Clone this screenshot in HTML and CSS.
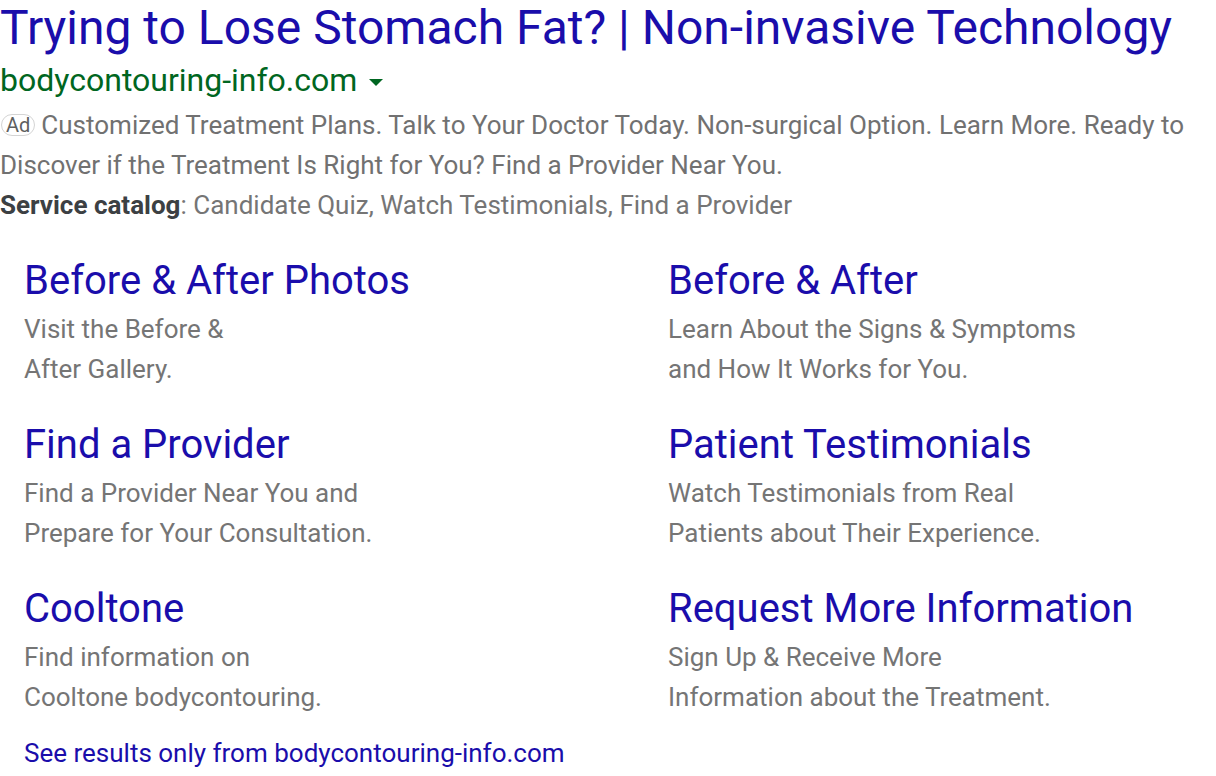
FILE: index.html
```html
<!DOCTYPE html>
<html>
<head>
<meta charset="utf-8">
<link rel="stylesheet" href="styles.css">
</head>
<body>
<div class="ad">
  <a class="title" href="#">Trying to Lose Stomach Fat? | Non-invasive Technology</a>
  <div class="url">bodycontouring-info.com <span class="caret"></span></div>
  <div class="desc"><span class="badge">Ad</span><span class="desc-text">Customized Treatment Plans. Talk to Your Doctor Today. Non-surgical Option. Learn More. Ready to Discover if the Treatment Is Right for You? Find a Provider Near You.</span></div>
  <div class="catalog"><b>Service catalog</b>: Candidate Quiz, Watch Testimonials, Find a Provider</div>
  <div class="sitelinks">
    <div class="sl">
      <a class="sl-title" href="#">Before &amp; After Photos</a>
      <div class="sl-desc">Visit the Before &amp;<br>After Gallery.</div>
    </div>
    <div class="sl">
      <a class="sl-title" href="#">Before &amp; After</a>
      <div class="sl-desc">Learn About the Signs &amp; Symptoms<br>and How It Works for You.</div>
    </div>
    <div class="sl">
      <a class="sl-title" href="#">Find a Provider</a>
      <div class="sl-desc">Find a Provider Near You and<br>Prepare for Your Consultation.</div>
    </div>
    <div class="sl">
      <a class="sl-title" href="#">Patient Testimonials</a>
      <div class="sl-desc">Watch Testimonials from Real<br>Patients about Their Experience.</div>
    </div>
    <div class="sl">
      <a class="sl-title" href="#">Cooltone</a>
      <div class="sl-desc">Find information on<br>Cooltone bodycontouring.</div>
    </div>
    <div class="sl">
      <a class="sl-title" href="#">Request More Information</a>
      <div class="sl-desc">Sign Up &amp; Receive More<br>Information about the Treatment.</div>
    </div>
  </div>
  <a class="more" href="#">See results only from bodycontouring-info.com</a>
</div>
</body>
</html>
```
FILE: styles.css
```css
html, body {
  margin: 0;
  padding: 0;
  background: #fff;
}
body {
  font-family: Roboto, "Liberation Sans", Arial, sans-serif;
  color: #757575;
}
a { text-decoration: none; }
.ad {
  width: 1216px;
}
.title {
  display: block;
  color: #1a0dab;
  font-size: 48px;
  line-height: 56px;
  white-space: nowrap;
}
.url {
  color: #006621;
  font-size: 32px;
  line-height: 40px;
  margin-top: 4px;
  display: flex;
  align-items: center;
  gap: 12px;
}
.caret {
  width: 0;
  height: 0;
  border-left: 7px solid transparent;
  border-right: 7px solid transparent;
  border-top: 7px solid #006621;
  margin-top: 4px;
}
.desc {
  font-size: 26px;
  line-height: 40px;
  margin-top: 5px;
  color: #717171;
}
.badge {
  display: inline-block;
  font-size: 20px;
  line-height: 20px;
  padding: 0 4px;
  border: 1px solid #d4d4d4;
  border-radius: 11px;
  color: #5f5f5f;
  vertical-align: 2px;
  margin-left: 1px;
  margin-right: 6px;
}
.catalog {
  font-size: 26px;
  line-height: 40px;
  color: #757575;
}
.catalog b {
  color: #3c4043;
  font-weight: 700;
}
.sitelinks {
  display: grid;
  grid-template-columns: 644px 1fr;
  padding-left: 24px;
  margin-top: 32px;
  row-gap: 32px;
}
.sl-title {
  display: block;
  color: #1a0dab;
  font-size: 40px;
  line-height: 48px;
}
.sl-desc {
  font-size: 26px;
  line-height: 40px;
  color: #757575;
  margin-top: 4px;
}
.more {
  display: block;
  margin-left: 24px;
  margin-top: 16px;
  color: #1a0dab;
  font-size: 26px;
  line-height: 40px;
}
```
